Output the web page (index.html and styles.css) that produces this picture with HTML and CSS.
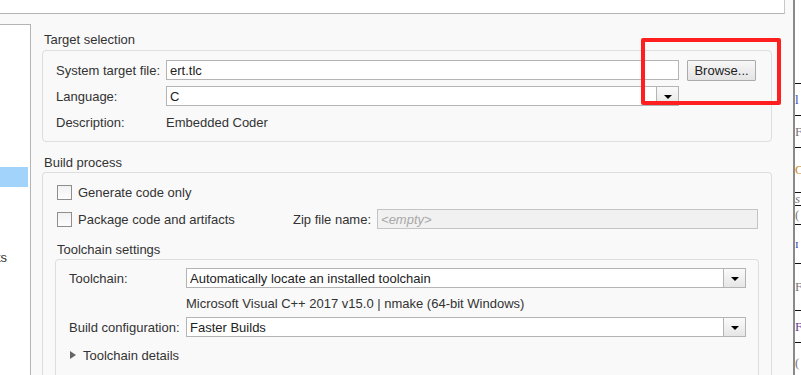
FILE: index.html
```html
<!DOCTYPE html>
<html lang="en">
<head>
  <meta charset="UTF-8">
  <title>Code Generation</title>
  <link rel="stylesheet" href="styles.css">
</head>
<body>

<div class="dialog">
  <div class="topbox"></div>

  <div class="body-row">
    <div class="tree">
      <div class="tree-gap"></div>
      <div class="tree-item selected"></div>
      <div class="tree-item"></div>
      <div class="tree-item"></div>
      <div class="tree-item"></div>
      <div class="tree-item"><span class="cut">Comments</span></div>
    </div>

    <div class="main">
      <div class="group-title">Target selection</div>
      <div class="group target">
        <div class="field-label">System target file:</div>
        <div class="input">ert.tlc</div>
        <button class="browse">Browse...</button>

        <div class="field-label">Language:</div>
        <div class="select">
          <span class="select-text">C</span>
          <span class="select-arrow"><i></i></span>
        </div>
        <div></div>

        <div class="field-label">Description:</div>
        <div class="field-value">Embedded Coder</div>
        <div></div>
      </div>

      <div class="group-title second">Build process</div>
      <div class="group build">
        <div class="check-row">
          <span class="checkbox"></span>
          <span>Generate code only</span>
        </div>
        <div class="check-row zip-row">
          <div class="check-part">
            <span class="checkbox"></span>
            <span>Package code and artifacts</span>
          </div>
          <span class="zip-label">Zip file name:</span>
          <div class="input disabled"><em>&lt;empty&gt;</em></div>
        </div>

        <div class="group-title sub">Toolchain settings</div>
        <div class="group toolchain">
          <div class="tc-row">
            <div class="tc-label">Toolchain:</div>
            <div class="select">
              <span class="select-text">Automatically locate an installed toolchain</span>
              <span class="select-arrow"><i></i></span>
            </div>
          </div>
          <div class="tc-row info">
            <div class="tc-label"></div>
            <div class="field-value">Microsoft Visual C++ 2017 v15.0 | nmake (64-bit Windows)</div>
          </div>
          <div class="tc-row config">
            <div class="tc-label">Build configuration:</div>
            <div class="select">
              <span class="select-text">Faster Builds</span>
              <span class="select-arrow"><i></i></span>
            </div>
          </div>
          <div class="tc-row details">
            <span class="expander"></span>
            <span>Toolchain details</span>
          </div>
        </div>
      </div>
    </div>
  </div>

  <div class="highlight-box"></div>
</div>

<div class="side">
  <div class="cell c0"></div>
  <div class="cell c1"><span class="blue">l</span></div>
  <div class="cell c2"><span>F</span></div>
  <div class="cell c3"><span class="orange">C</span></div>
  <div class="cell c4"><span><i>s</i></span></div>
  <div class="cell c5"><span>(</span></div>
  <div class="cell c6"><span class="blue">ɪ</span></div>
  <div class="cell c7"><span>F</span></div>
  <div class="cell c8"><span class="purple">F</span></div>
  <div class="cell c9"><span>(</span></div>
</div>

</body>
</html>
```

FILE: styles.css
```css
body {
  margin: 0;
  width: 801px;
  height: 375px;
  overflow: hidden;
  display: flex;
  font-family: 'Liberation Sans', Arial, sans-serif;
  font-size: 13px;
  color: #333;
  background: #f9f9f9;
}

.dialog {
  position: relative;
  width: 795px;
  display: flex;
  flex-direction: column;
}

.topbox {
  box-sizing: border-box;
  width: 785px;
  height: 14px;
  background: #fff;
  border-bottom: 1px solid #b4b4b4;
  border-right: 1px solid #c8c8c8;
}

.body-row {
  flex: 1;
  display: flex;
  min-height: 0;
  overflow: hidden;
}

/* left tree, mostly scrolled out of view */
.tree {
  box-sizing: border-box;
  width: 31px;
  margin-top: 10px;
  background: #fff;
  border-top: 1px solid #b4b4b4;
  border-right: 1px solid #b4b4b4;
  overflow: hidden;
}

.tree-gap {
  height: 142px;
}

.tree-item {
  height: 20px;
  width: 7px;
  display: flex;
  align-items: center;
  justify-content: flex-end;
  white-space: nowrap;
}

.tree-item.selected {
  width: 28px;
  background: #a2d4fb;
}

.cut {
  color: #333;
}

.main {
  flex: 1;
  padding: 17px 21px 0 11px;
  min-width: 0;
}

.group-title {
  line-height: 16px;
  padding: 1px 0 0 2px;
  margin-bottom: 2px;
}

.group-title.second {
  margin-top: 12px;
  margin-bottom: 1px;
}

.group-title.sub {
  margin-top: 12px;
  margin-bottom: 1px;
}

.group {
  border: 1px solid #dedede;
  border-radius: 4px;
}

.target {
  display: grid;
  grid-template-columns: 110px 1fr 77px;
  grid-auto-rows: 20px;
  row-gap: 6px;
  padding: 9px 15px 9px 13px;
}

.field-label, .field-value {
  display: flex;
  align-items: center;
  white-space: nowrap;
}

.input {
  box-sizing: border-box;
  height: 20px;
  border: 1px solid #b4b4b4;
  background: #fff;
  padding-left: 3px;
  display: flex;
  align-items: center;
  color: #222;
}

.input.disabled {
  flex: 1;
  background: #f1f1f1;
  border-color: #c4c4c4;
}

.input.disabled em {
  color: #a8a8a8;
}

.browse {
  justify-self: end;
  width: 69px;
  height: 21px;
  padding: 0;
  font: inherit;
  color: #222;
  border: 1px solid #ababab;
  border-radius: 1px;
  background: linear-gradient(#f7f7f7, #e4e4e4);
}

.select {
  box-sizing: border-box;
  height: 20px;
  display: flex;
  border: 1px solid #b4b4b4;
  background: #fff;
}

.select-text {
  flex: 1;
  padding-left: 3px;
  display: flex;
  align-items: center;
  color: #222;
  white-space: nowrap;
}

.select-arrow {
  width: 21px;
  border-left: 1px solid #b4b4b4;
  background: linear-gradient(#fafafa, #e6e6e6);
  display: flex;
  align-items: center;
  justify-content: center;
}

.select-arrow i {
  width: 0;
  height: 0;
  border-top: 4px solid #000;
  border-left: 4px solid transparent;
  border-right: 4px solid transparent;
  margin-top: 1px;
}

.build {
  border-bottom: none;
  border-radius: 4px 4px 0 0;
  padding: 9px 12px 0 12px;
  height: 220px;
}

.check-row {
  height: 20px;
  display: flex;
  align-items: center;
  white-space: nowrap;
}

.zip-row {
  margin-top: 7px;
  margin-right: 1px;
}

.check-part {
  width: 238px;
  display: flex;
  align-items: center;
}

.checkbox {
  box-sizing: border-box;
  width: 15px;
  height: 15px;
  margin: 0 6px 0 2px;
  border: 1px solid #8e8e8e;
  background: linear-gradient(#f2f2f2, #fdfdfd);
}

.zip-label {
  margin-right: 6px;
}

.toolchain {
  border-bottom: none;
  border-radius: 4px 4px 0 0;
  padding: 8px 12px 0 13px;
  height: 120px;
}

.tc-row {
  height: 20px;
  display: flex;
}

.tc-row .select {
  flex: 1;
}

.tc-row.info {
  margin-top: 5px;
}

.tc-row.config {
  margin-top: 4px;
}

.tc-row.details {
  margin-top: 8px;
  align-items: center;
}

.tc-label {
  width: 117px;
  flex-shrink: 0;
  display: flex;
  align-items: center;
  white-space: nowrap;
}

.expander {
  width: 0;
  height: 0;
  margin: 0 7px 0 1px;
  border-left: 6px solid #666;
  border-top: 4px solid transparent;
  border-bottom: 4px solid transparent;
}

/* red annotation drawn over the dialog */
.highlight-box {
  position: absolute;
  left: 641px;
  top: 38px;
  width: 140px;
  height: 67px;
  box-sizing: border-box;
  border: 4px solid #ff1f1f;
  border-radius: 2px;
}

/* neighbouring window peeking in at the right edge */
.side {
  width: 6px;
  border-left: 2px solid #8a8a8a;
  background: #fff;
  overflow: hidden;
  font-family: 'Liberation Serif', serif;
  font-size: 13px;
}

.cell {
  box-sizing: border-box;
  border-bottom: 1px solid #111;
  display: flex;
  align-items: center;
  overflow: hidden;
  color: #777;
}

.c0 { height: 84px; }
.c1 { height: 32px; }
.c2 { height: 32px; }
.c3 { height: 45px; }
.c4 { height: 13px; }
.c5 { height: 19px; }
.c6 { height: 39px; }
.c7 { height: 47px; }
.c8 { height: 32px; }
.c9 { height: 40px; border-bottom: none; }

.blue { color: #2d4fb8; }
.orange { color: #d08a2a; }
.purple { color: #6a3d9a; }
```
